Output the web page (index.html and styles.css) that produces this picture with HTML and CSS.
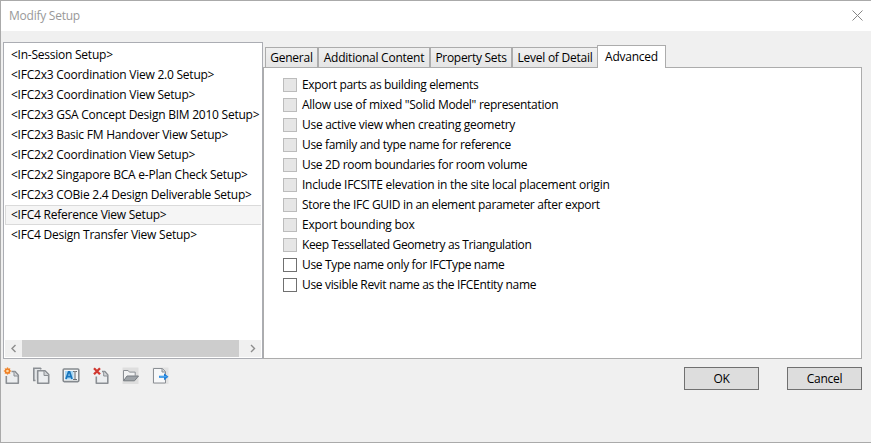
FILE: index.html
```html
<!DOCTYPE html>
<html lang="en">
<head>
<meta charset="utf-8">
<title>Modify Setup</title>
<link rel="stylesheet" href="styles.css">
</head>
<body>
<div class="dialog">
  <header class="titlebar">
    <span class="caption">Modify Setup</span>
    <svg class="close" width="11" height="11" viewBox="0 0 11 11"><path d="M.5.5l10 10M10.5.5l-10 10" stroke="#858585" fill="none"/></svg>
  </header>
  <main class="content">
    <section class="setups">
      <ul class="list">
        <li>&lt;In-Session Setup&gt;</li>
        <li>&lt;IFC2x3 Coordination View 2.0 Setup&gt;</li>
        <li>&lt;IFC2x3 Coordination View Setup&gt;</li>
        <li>&lt;IFC2x3 GSA Concept Design BIM 2010 Setup&gt;</li>
        <li>&lt;IFC2x3 Basic FM Handover View Setup&gt;</li>
        <li>&lt;IFC2x2 Coordination View Setup&gt;</li>
        <li>&lt;IFC2x2 Singapore BCA e-Plan Check Setup&gt;</li>
        <li>&lt;IFC2x3 COBie 2.4 Design Deliverable Setup&gt;</li>
        <li class="selected">&lt;IFC4 Reference View Setup&gt;</li>
        <li>&lt;IFC4 Design Transfer View Setup&gt;</li>
      </ul>
      <div class="scrollbar">
        <svg width="17" height="17" viewBox="0 0 17 17"><path d="M10.500 5L7 8.500l3.500 3.500" fill="none" stroke="#8c8c8c" stroke-width="1.400"/></svg>
        <div class="thumb"></div>
        <svg class="right" width="17" height="17" viewBox="0 0 17 17"><path d="M7 5l3.500 3.500L7 12" fill="none" stroke="#8c8c8c" stroke-width="1.400"/></svg>
      </div>
    </section>
    <section class="tabs">
      <nav class="tabstrip">
        <span class="tab general">General</span>
        <span class="tab additional">Additional Content</span>
        <span class="tab property">Property Sets</span>
        <span class="tab level">Level of Detail</span>
        <span class="tab active">Advanced</span>
      </nav>
      <div class="panel">
        <div class="option disabled"><i></i><span>Export parts as building elements</span></div>
        <div class="option disabled wide"><i></i><span>Allow use of mixed "Solid Model" representation</span></div>
        <div class="option disabled wide"><i></i><span>Use active view when creating geometry</span></div>
        <div class="option disabled"><i></i><span>Use family and type name for reference</span></div>
        <div class="option disabled"><i></i><span>Use 2D room boundaries for room volume</span></div>
        <div class="option disabled widest"><i></i><span>Include IFCSITE elevation in the site local placement origin</span></div>
        <div class="option disabled"><i></i><span>Store the IFC GUID in an element parameter after export</span></div>
        <div class="option disabled widest"><i></i><span>Export bounding box</span></div>
        <div class="option disabled tight"><i></i><span>Keep Tessellated Geometry as Triangulation</span></div>
        <div class="option"><i></i><span>Use Type name only for IFCType name</span></div>
        <div class="option"><i></i><span>Use visible Revit name as the IFCEntity name</span></div>
      </div>
    </section>
  </main>
  <footer class="footer">
    <div class="tools">
      <svg width="18" height="18" viewBox="0 0 18 18">
        <path d="M4.300 9v7.300h12V8.300L13 4.500H9.500" fill="#eceef0" stroke="#8b8f94" stroke-width="1.600" stroke-linejoin="round"/><path d="M12 4.500V9h4" fill="#d5d8db" stroke="#8b8f94"/>
        <path d="M5.500.3v7.400M1.800 4h7.400M2.900 1.400l5.200 5.200M8.100 1.400L2.900 6.600" stroke="#f5a154" stroke-width="1.300"/><circle cx="5.500" cy="4" r="2.100" fill="#ffd9a4" stroke="#ee7d22" stroke-width="1.500"/>
      </svg>
      <svg width="18" height="18" viewBox="0 0 18 18">
        <path d="M3.500 13.500H1.800V1.200h6.500l1 1" fill="#e4e6e8" stroke="#8b8f94" stroke-width="1.600"/><path d="M5.700 3.800h7.300l3.700 3.700v8.700h-11z" fill="#eceef0" stroke="#8b8f94" stroke-width="1.600" stroke-linejoin="round"/><path d="M12 4v4.500h4.500" fill="#cfd2d5" stroke="#8b8f94"/>
      </svg>
      <svg width="18" height="18" viewBox="0 0 18 18">
        <rect x="1.200" y="2" width="15.600" height="12.600" rx="1" fill="#f3f4f5" stroke="#858a8f" stroke-width="1.600"/><rect x="3" y="4" width="8.500" height="8.500" fill="#a9d7f4"/><path d="M4 12l2.600-7h1L10 12M5 9.700h4" fill="none" stroke="#1976bd" stroke-width="1.800"/><path d="M11 4.500h1.200l.8.600.8-.600H15M13 5v7M11 12.500h1.200l.8-.600.8.600H15" fill="none" stroke="#6d7277" stroke-width="1.100"/>
      </svg>
      <svg width="18" height="18" viewBox="0 0 18 18">
        <path d="M4.300 9.500v6.800h11.500V8L12.800 4.500H10" fill="#eceef0" stroke="#8b8f94" stroke-width="1.600" stroke-linejoin="round"/><path d="M11.700 4.500V9h4" fill="#d5d8db" stroke="#8b8f94"/><path d="M2 1.200l6 6M8 1.200l-6 6" stroke="#d03830" stroke-width="2.300"/>
      </svg>
      <svg width="18" height="18" viewBox="0 0 18 18">
        <rect x=".5" y=".5" width="16" height="16.500" fill="#dedede"/><path d="M1.500 13.500V3.500h4.600l1.300 1.600h5.800v3.500" fill="#f1f2f3" stroke="#8b8f94"/><path d="M1.500 13.800L5 9h11.500l-4 4.800z" fill="#9ea3a8" stroke="#777c81"/>
      </svg>
      <svg width="18" height="18" viewBox="0 0 18 18">
        <rect x=".5" y=".5" width="16" height="16.500" fill="#e2e2e2"/><path d="M1.500 1.500h9l3 3v11.500h-12z" fill="#f7f8f9" stroke="#8b8f94"/><path d="M10 1.500V5h3.500" fill="#d5d8db" stroke="#8b8f94"/><path d="M7 8.700h5V6.200l4.500 3.500-4.500 3.500v-2.500H7z" fill="#1b7fdc"/><path d="M7.500 9.700h7" stroke="#58adf0"/>
      </svg>
    </div>
    <button class="ok">OK</button>
    <button>Cancel</button>
  </footer>
  <div class="tick"></div>
</div>
</body>
</html>
```
FILE: styles.css
```css
* { box-sizing: border-box; }
body {
  margin: 0;
  background: #f0f0f0;
  color: #000;
  font: 12px/16px "Open Sans", "Noto Sans", sans-serif;
  letter-spacing: -0.24px;
}
.dialog {
  position: relative;
  width: 871px;
  height: 443px;
  border: 1px solid #aaa;
  border-right: 0;
  background: #f0f0f0;
  white-space: nowrap;
  overflow: hidden;
}
.titlebar {
  display: flex;
  justify-content: space-between;
  align-items: center;
  height: 30px;
  padding: 0 8px;
  background: #fff;
  color: #999;
}
.close { margin-top: -2px; }
.content { display: flex; height: 328px; padding: 11px 9px 0 2px; }
.setups {
  display: flex;
  flex-direction: column;
  width: 260px;
  height: 317px;
  border: 1px solid #abadb3;
  padding: 1px;
  background: #fff;
}
.list { flex: 1; margin: 0; padding: 1px 0 0; list-style: none; }
.list li { height: 20px; padding: 1px 5px; border: 1px solid transparent; border-right: 0; }
.list .selected { background: #f5f5f5; border-color: #dadada; }
.scrollbar { display: flex; height: 17px; background: #f0f0f0; }
.thumb { width: 217px; background: #cdcdcd; }
.right { margin-left: 5px; }
.tabs { display: flex; flex-direction: column; width: 599px; padding-top: 3px; }
.tabstrip { display: flex; align-items: flex-end; height: 23px; padding-left: 2px; z-index: 1; }
.tab {
  height: 21px;
  padding-top: 2px;
  border: 1px solid #acacac;
  background: linear-gradient(#f0f0f0, #e5e5e5);
  text-align: center;
}
.general { width: 53px; }
.additional { width: 112px; }
.property { width: 82px; letter-spacing: -0.3px; }
.level { width: 85px; border-right: 0; }
.active {
  width: 69px;
  height: 23px;
  border-bottom: 0;
  background: #fff;
  padding-top: 3px;
}
.panel {
  flex: 1;
  margin-top: -1px;
  padding: 7px 0 0 19px;
  border: 1px solid #acacac;
  background: #fff;
}
.option { display: flex; align-items: center; height: 20px; gap: 5px; letter-spacing: -0.33px; }
.option.wide { letter-spacing: -0.285px; }
.option.widest { letter-spacing: -0.25px; }
.option.tight { letter-spacing: -0.38px; }
.option i { width: 14px; height: 14px; border: 1px solid #707070; background: #fff; }
.option.disabled i { border-color: #bcbcbc; background: #e6e6e6; }
.footer { display: flex; padding: 8px 9px 0 1px; }
.tools { display: flex; gap: 12px; flex: 1; }
button {
  width: 75px;
  height: 23px;
  padding: 0;
  border: 1px solid #707070;
  background: #ddd;
  color: #000;
  font: inherit;
  letter-spacing: inherit;
}
.ok { margin-right: 28px; }
.tick { position: absolute; left: 157px; bottom: -1px; width: 1px; height: 1px; background: #000; }
```
